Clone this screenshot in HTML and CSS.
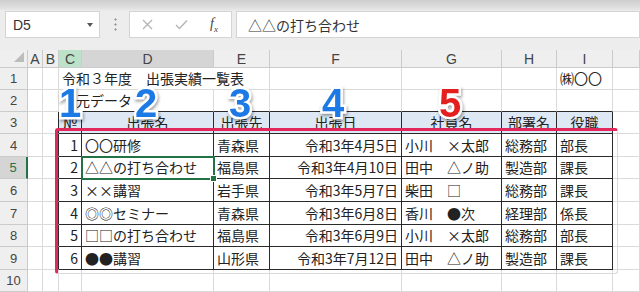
FILE: index.html
```html
<!DOCTYPE html>
<html lang="ja">
<head>
    <meta charset="UTF-8">
    <title>出張実績一覧表</title>
    <link rel="stylesheet" href="styles.css">
</head>
<body>
    <div class="topbar">
        <div class="namebox">D5<span class="drop"></span></div>
        <div class="grip"></div>
        <div class="fxbox">
            <svg class="ico" width="11" height="11" viewBox="0 0 11 11"><path d="M1 1 L10 10 M10 1 L1 10" stroke="#b4b4b4" stroke-width="1.3" fill="none"/></svg>
            <svg class="ico" width="13" height="11" viewBox="0 0 13 11"><path d="M1 6 L4.5 9.5 L12 1.5" stroke="#b4b4b4" stroke-width="1.4" fill="none"/></svg>
            <span class="fx">f<sub>x</sub></span>
        </div>
        <div class="formula">△△の打ち合わせ</div>
    </div>

    <div class="sheet">
        <!-- column headers -->
        <div class="ch corner"><span class="tri"></span></div>
        <div class="ch">A</div>
        <div class="ch">B</div>
        <div class="ch on">C</div>
        <div class="ch sel">D</div>
        <div class="ch">E</div>
        <div class="ch">F</div>
        <div class="ch">G</div>
        <div class="ch">H</div>
        <div class="ch">I</div>
        <div class="ch"></div>

        <!-- row 1 -->
        <div class="rh">1</div>
        <div></div><div></div>
        <div class="span3">令和３年度　出張実績一覧表</div>
        <div></div><div></div><div></div>
        <div>㈱〇〇</div>
        <div></div>

        <!-- row 2 -->
        <div class="rh">2</div>
        <div></div><div></div>
        <div class="span2 tb">　元データ</div>
        <div class="tb"></div><div class="tb"></div><div class="tb"></div><div class="tb"></div><div class="tb"></div>
        <div></div>

        <!-- row 3 -->
        <div class="rh">3</div>
        <div></div><div class="tr"></div>
        <div class="t th">№</div>
        <div class="t th">出張名</div>
        <div class="t th">出張先</div>
        <div class="t th">出張日</div>
        <div class="t th">社員名</div>
        <div class="t th">部署名</div>
        <div class="t th">役職</div>
        <div></div>

        <!-- row 4 -->
        <div class="rh">4</div>
        <div></div><div class="tr"></div>
        <div class="t r">1</div>
        <div class="t">〇〇研修</div>
        <div class="t">青森県</div>
        <div class="t r">令和3年4月5日</div>
        <div class="t">小川　×太郎</div>
        <div class="t">総務部</div>
        <div class="t">部長</div>
        <div></div>

        <!-- row 5 -->
        <div class="rh sel">5</div>
        <div></div><div class="tr"></div>
        <div class="t r">2</div>
        <div class="t act">△△の打ち合わせ</div>
        <div class="t">福島県</div>
        <div class="t r">令和3年4月10日</div>
        <div class="t">田中　△ノ助</div>
        <div class="t">製造部</div>
        <div class="t">課長</div>
        <div></div>

        <!-- row 6 -->
        <div class="rh">6</div>
        <div></div><div class="tr"></div>
        <div class="t r">3</div>
        <div class="t">××講習</div>
        <div class="t">岩手県</div>
        <div class="t r">令和3年5月7日</div>
        <div class="t">柴田　□</div>
        <div class="t">総務部</div>
        <div class="t">課長</div>
        <div></div>

        <!-- row 7 -->
        <div class="rh">7</div>
        <div></div><div class="tr"></div>
        <div class="t r">4</div>
        <div class="t">◎◎セミナー</div>
        <div class="t">青森県</div>
        <div class="t r">令和3年6月8日</div>
        <div class="t">香川　●次</div>
        <div class="t">経理部</div>
        <div class="t">係長</div>
        <div></div>

        <!-- row 8 -->
        <div class="rh">8</div>
        <div></div><div class="tr"></div>
        <div class="t r">5</div>
        <div class="t">□□の打ち合わせ</div>
        <div class="t">福島県</div>
        <div class="t r">令和3年6月9日</div>
        <div class="t">小川　×太郎</div>
        <div class="t">総務部</div>
        <div class="t">部長</div>
        <div></div>

        <!-- row 9 -->
        <div class="rh">9</div>
        <div></div><div class="tr"></div>
        <div class="t r">6</div>
        <div class="t">●●講習</div>
        <div class="t">山形県</div>
        <div class="t r">令和3年7月12日</div>
        <div class="t">田中　△ノ助</div>
        <div class="t">製造部</div>
        <div class="t">課長</div>
        <div></div>

        <!-- row 10 -->
        <div class="rh">10</div>
        <div></div><div></div><div></div><div></div><div></div><div></div><div></div><div></div><div></div><div></div>

        <!-- overlays -->
        <div class="frame"></div>
        <span class="mark m1">1</span>
        <span class="mark m2">2</span>
        <span class="mark m3">3</span>
        <span class="mark m4">4</span>
        <span class="mark m5">5</span>
    </div>
</body>
</html>
```

FILE: styles.css
```css
body {
    margin: 0;
    width: 640px;
    height: 292px;
    overflow: hidden;
    background: #fff;
    font-family: "Noto Sans CJK JP", sans-serif;
    color: #222;
}

.topbar {
    height: 50px;
    box-sizing: border-box;
    padding: 11px 0 0 5px;
    display: flex;
    align-items: flex-start;
    background: linear-gradient(#cdcdcd, #e4e4e4 9px, #ededed 11px, #ededed);
}

.namebox {
    width: 95px;
    height: 27px;
    box-sizing: border-box;
    background: #fff;
    border: 1px solid #d4d4d4;
    padding: 0 6px 0 7px;
    display: flex;
    align-items: center;
    justify-content: space-between;
    font: 14px "Liberation Sans", sans-serif;
    color: #333;
}

.drop {
    width: 0;
    height: 0;
    border-left: 3px solid transparent;
    border-right: 3px solid transparent;
    border-top: 4px solid #555;
}

.grip {
    width: 3px;
    height: 14px;
    margin: 6px 12px 0 14px;
    background: radial-gradient(circle, #9a9a9a 0.9px, transparent 1.3px) 0 0 / 3px 5px;
}

.fxbox {
    width: 103px;
    height: 27px;
    box-sizing: border-box;
    background: #fff;
    border: 1px solid #d4d4d4;
    padding-left: 12px;
    display: flex;
    align-items: center;
}

.fxbox .ico {
    margin-right: 22px;
}

.fx {
    font: italic 14px "Liberation Serif", serif;
    color: #444;
}

.fx sub {
    font-size: 9px;
}

.formula {
    flex: 1;
    height: 27px;
    margin-left: 4px;
    box-sizing: border-box;
    background: #fff;
    border: 1px solid #d4d4d4;
    padding-left: 11px;
    display: flex;
    align-items: center;
    font-size: 14px;
    color: #333;
}

.sheet {
    position: relative;
    display: grid;
    grid-template-columns: 28px 15px 16px 23px 132px 56px 132px 100px 55px 56px 1fr;
    grid-template-rows: 18px 22px 22px 22px 23px 22px 23px 23px 22px 23px 22px;
}

.sheet > div {
    box-sizing: border-box;
    border-right: 1px solid #dadada;
    border-bottom: 1px solid #dadada;
    padding: 0 3px 2px;
    display: flex;
    align-items: flex-end;
    font-size: 14px;
    line-height: 17px;
    white-space: nowrap;
    min-width: 0;
}

.sheet > .ch,
.sheet > .rh {
    background: #efefef;
    border-color: #cbcbcb;
    padding: 0;
    align-items: center;
    justify-content: center;
    font: 14px "Liberation Sans", sans-serif;
    color: #444;
}

.sheet > .rh {
    font-size: 13px;
}

.sheet > .corner {
    justify-content: flex-end;
    align-items: flex-end;
    padding: 0 3px 5px 0;
}

.tri {
    width: 0;
    height: 0;
    border-left: 10px solid transparent;
    border-bottom: 10px solid #bcbcbc;
}

.sheet > .ch.on {
    background: #bde2ca;
}

.sheet > .ch.sel {
    background: #d5d5d5;
}

.sheet > .rh.sel {
    background: #d5d5d5;
    color: #217346;
    border-right: 2px solid #217346;
}

.span3 { grid-column: span 3; }
.span2 { grid-column: span 2; }

.sheet > .t {
    border-right-color: #2a2a2a;
    border-bottom-color: #2a2a2a;
}

.sheet > .tb { border-bottom-color: #2a2a2a; }
.sheet > .tr { border-right-color: #2a2a2a; }

.sheet > .th {
    background: #dde8f4;
    justify-content: center;
}

.sheet > .r {
    justify-content: flex-end;
}

.sheet > .act {
    position: relative;
    z-index: 1;
    outline: 2px solid #217346;
    outline-offset: -1px;
}

.act::after {
    content: "";
    position: absolute;
    right: -4px;
    bottom: -4px;
    width: 5px;
    height: 5px;
    background: #217346;
    border: 1px solid #fff;
}

.frame {
    position: absolute;
    left: 55px;
    top: 78px;
    width: 563px;
    height: 146px;
    box-sizing: border-box;
    border: 3px solid #e2275b;
    border-radius: 3px;
    z-index: 2;
}

.mark {
    position: absolute;
    top: 33px;
    z-index: 3;
    font: bold 40px/1 "Liberation Sans", sans-serif;
    color: #1d79e3;
    -webkit-text-stroke: 5px #fff;
    paint-order: stroke fill;
    filter: drop-shadow(1px 2px 1.5px rgba(0, 0, 0, 0.35));
}

.m1 { left: 59px; }
.m2 { left: 135px; }
.m3 { left: 229px; }
.m4 { left: 322px; }
.m5 { left: 439px; color: #e3201e; }
```
